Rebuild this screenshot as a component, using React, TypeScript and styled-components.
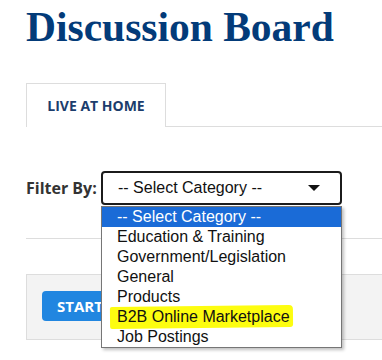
import styled, { createGlobalStyle } from 'styled-components';

const GlobalStyle = createGlobalStyle`
  body {
    margin: 0;
    background: #ffffff;
    overflow: hidden;
    font-family: 'Open Sans', 'Liberation Sans', sans-serif;
  }
`;

const Page = styled.div`
  min-height: 360px;
  padding-left: 26px;
  box-sizing: border-box;
  position: relative;
`;

const Title = styled.h1`
  margin: 0;
  padding-top: 3px;
  font-family: 'Liberation Serif', 'Times New Roman', serif;
  font-weight: 700;
  font-size: 41.5px;
  line-height: 49px;
  color: #033b79;
`;

const TabBar = styled.div`
  display: flex;
  margin-top: 31px;
  border-bottom: 1px solid #dddddd;
`;

const Tab = styled.div`
  display: flex;
  align-items: center;
  justify-content: center;
  width: 140px;
  height: 44px;
  margin-bottom: -1px;
  box-sizing: border-box;
  border: 1px solid #dddddd;
  border-bottom: none;
  background: #ffffff;
  color: #1c3d6c;
  font-size: 14px;
  font-weight: 700;
`;

const FilterRow = styled.div`
  display: flex;
  align-items: center;
  margin-top: 44px;
`;

const Label = styled.span`
  width: 75px;
  font-size: 16px;
  font-weight: 700;
  color: #333333;
`;

const SelectWrap = styled.div`
  position: relative;
`;

const SelectBox = styled.div`
  display: flex;
  align-items: center;
  justify-content: space-between;
  width: 241px;
  height: 34px;
  box-sizing: border-box;
  padding: 0 20px 0 15px;
  border: 2px solid #1b1b1b;
  border-radius: 4px;
  font-family: 'Liberation Sans', Arial, sans-serif;
  font-size: 16px;
  color: #111111;
`;

const Caret = styled.span`
  width: 0;
  height: 0;
  border-left: 6px solid transparent;
  border-right: 6px solid transparent;
  border-top: 6px solid #111111;
`;

const OptionList = styled.ul`
  position: absolute;
  top: 35px;
  left: 0;
  z-index: 10;
  width: 241px;
  margin: 0;
  padding: 0;
  list-style: none;
  box-sizing: border-box;
  border: 1px solid #767676;
  background: #ffffff;
  box-shadow: 2px 2px 3px rgba(0, 0, 0, 0.25);
  font-family: 'Liberation Sans', Arial, sans-serif;
  font-size: 16px;
`;

const Option = styled.li<{ $selected?: boolean }>`
  position: relative;
  height: 20px;
  line-height: 20px;
  padding-left: 15px;
  background: ${(p) => (p.$selected ? '#1a6bd7' : 'transparent')};
  color: ${(p) => (p.$selected ? '#ffffff' : '#111111')};
`;

const Marked = styled.span`
  position: relative;

  &::before {
    content: '';
    position: absolute;
    left: -7px;
    right: -3px;
    top: -2px;
    bottom: -3px;
    z-index: -1;
    background: #fdfd10;
    border-radius: 2px 4px 3px 2px;
    transform: rotate(-0.6deg);
  }
`;

const Divider = styled.div`
  margin-top: 33px;
  border-top: 1px solid #dddddd;
`;

const Panel = styled.div`
  margin-top: 35px;
  height: 66px;
  box-sizing: border-box;
  padding: 16px 15px;
  background: #f3f3f3;
  border: 1px solid #dddddd;
  border-right: none;
`;

const StartButton = styled.button`
  height: 30px;
  padding: 0 15px;
  border: none;
  border-radius: 4px;
  background: #2186e0;
  color: #ffffff;
  font-family: 'Open Sans', 'Liberation Sans', sans-serif;
  font-size: 15px;
  font-weight: 700;
`;

const categories = [
  '-- Select Category --',
  'Education & Training',
  'Government/Legislation',
  'General',
  'Products',
  'B2B Online Marketplace',
  'Job Postings',
];

export default function App() {
  return (
    <>
      <GlobalStyle />
      <Page>
        <Title>Discussion Board</Title>
        <TabBar>
          <Tab>LIVE AT HOME</Tab>
        </TabBar>
        <FilterRow>
          <Label>Filter By:</Label>
          <SelectWrap>
            <SelectBox>
              <span>-- Select Category --</span>
              <Caret />
            </SelectBox>
            <OptionList>
              {categories.map((c, i) => (
                <Option key={c} $selected={i === 0}>
                  {c === 'B2B Online Marketplace' ? <Marked>{c}</Marked> : c}
                </Option>
              ))}
            </OptionList>
          </SelectWrap>
        </FilterRow>
        <Divider />
        <Panel>
          <StartButton>START A DISCUSSION</StartButton>
        </Panel>
      </Page>
    </>
  );
}
